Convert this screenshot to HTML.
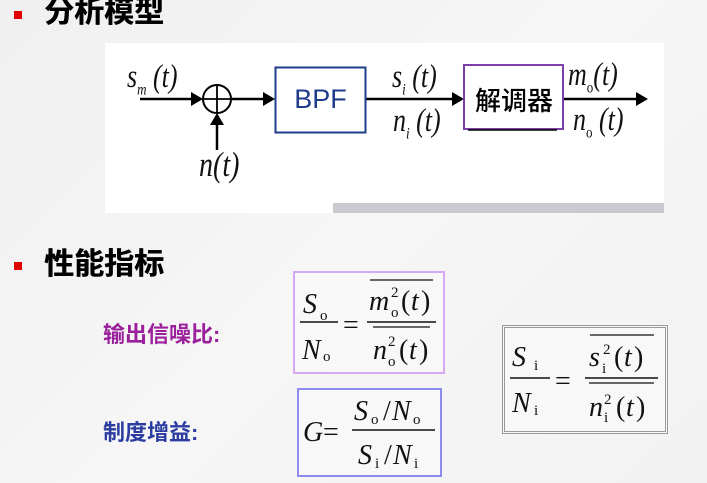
<!DOCTYPE html>
<html><head><meta charset="utf-8"><style>
body{margin:0;width:707px;height:483px;overflow:hidden;background:linear-gradient(135deg,#f0f0f0,#f7f6f6 50%,#f2f2f2);position:relative;font-family:"Liberation Sans","Noto Sans CJK SC",sans-serif}
.a{position:absolute}
.sq{width:8px;height:8px;background:#e00000}
.h{font-weight:bold;font-size:30px;color:#000;line-height:32px;text-shadow:0.5px 0 0 #000}
.m{font-family:"Liberation Serif",serif;font-style:italic;color:#111;white-space:nowrap;transform:scaleY(1.25);transform-origin:0 0}
.r{font-style:normal}
</style></head><body>
<div class="a sq" style="left:14px;top:11px"></div>
<div class="a h" style="left:44px;top:-3px">分析模型</div>
<div class="a" style="left:105px;top:43px;width:559px;height:170px;background:#fff"></div>
<div class="a" style="left:333px;top:203px;width:331px;height:10px;background:#c9c9cf"></div>
<svg class="a" style="left:0;top:0" width="707" height="483">
<g stroke="#000" stroke-width="2.5" fill="none">
<line x1="140" y1="99" x2="196" y2="99"/>
<line x1="232" y1="99" x2="266" y2="99"/>
<line x1="366" y1="99" x2="455" y2="99"/>
<line x1="564" y1="99" x2="636" y2="99"/>
<line x1="217" y1="150" x2="217" y2="124"/>
<circle cx="217" cy="99" r="14" stroke-width="2"/>
<line x1="203" y1="99" x2="231" y2="99" stroke-width="1.8"/>
<line x1="217" y1="85" x2="217" y2="113" stroke-width="1.8"/>
</g>
<g fill="#000">
<path d="M203 99 l-12 -7 v14z"/><path d="M275 99 l-12 -7 v14z"/><path d="M464 99 l-12 -7 v14z"/><path d="M648 99 l-12 -7 v14z"/><path d="M217 113 l-7 12 h14z"/>
</g>
<rect x="275.5" y="67.5" width="90" height="65" fill="#fff" stroke="#1f3c8a" stroke-width="2"/>
<rect x="464" y="65" width="99" height="64" fill="#fff" stroke="#7d3fa8" stroke-width="2"/>
<line x1="468" y1="130" x2="557" y2="130" stroke="#000" stroke-width="1.5"/>
</svg>
<div class="a" style="left:275px;top:84px;width:91px;text-align:center;font-size:27px;color:#1f3c8a">BPF</div>
<div class="a" style="left:464px;top:81px;width:100px;text-align:center;font-size:26px;color:#000;font-weight:500">解调器</div>
<div class="a m" style="left:127px;top:58px;font-size:26px">s<sub style="font-size:13px">m</sub> (t)</div>
<div class="a m" style="left:199px;top:146px;font-size:28px">n(t)</div>
<div class="a m" style="left:392px;top:58px;font-size:26px">s<sub style="font-size:13px">i</sub> (t)</div>
<div class="a m" style="left:393px;top:102px;font-size:26px">n<sub style="font-size:13px">i</sub> (t)</div>
<div class="a m" style="left:568px;top:56px;font-size:26px">m<sub style="font-size:13px" class="r">o</sub>(t)</div>
<div class="a m" style="left:573px;top:101px;font-size:26px">n<sub style="font-size:13px" class="r">o</sub> (t)</div>

<div class="a sq" style="left:14px;top:262px"></div>
<div class="a h" style="left:44px;top:249px">性能指标</div>
<div class="a" style="left:103px;top:317px;font-size:22px;font-weight:bold;color:#9a209c">输出信噪比:</div>
<div class="a" style="left:103px;top:415px;font-size:22px;font-weight:bold;color:#2b3da0">制度增益:</div>

<div class="a" style="left:293px;top:271px;width:148px;height:99px;border:2px solid #d6a8f2;background:#f8f8f8"></div>
<div class="a" style="left:297px;top:388px;width:141px;height:85px;border:2px solid #8c8cf0;background:#f8f8f8"></div>
<div class="a" style="left:502px;top:325px;width:160px;height:103px;border:3px double #999;background:#f8f8f8"></div>

<svg class="a" style="left:0;top:0" width="707" height="483" font-family="Liberation Serif,serif" font-style="italic" fill="#111">
<g font-size="28">
<text x="303" y="313">S</text><text x="320" y="320" font-size="15" font-style="normal">o</text>
<text x="302" y="359">N</text><text x="323" y="361" font-size="15" font-style="normal">o</text>
<line x1="300" y1="322" x2="338" y2="322" stroke="#111" stroke-width="1.5"/>
<text x="343" y="334" font-style="normal">=</text>
<line x1="370" y1="280" x2="433" y2="280" stroke="#111" stroke-width="1.3"/>
<text x="369" y="310">m</text><text x="391" y="297" font-size="15" font-style="normal">2</text><text x="391" y="317" font-size="15" font-style="normal">o</text><text x="401" y="310" font-style="normal">(</text><text x="411" y="310">t</text><text x="421" y="310" font-style="normal">)</text>
<line x1="367" y1="322" x2="436" y2="322" stroke="#111" stroke-width="1.5"/>
<line x1="373" y1="327" x2="430" y2="327" stroke="#111" stroke-width="1.3"/>
<text x="373" y="359">n</text><text x="388" y="346" font-size="15" font-style="normal">2</text><text x="388" y="366" font-size="15" font-style="normal">o</text><text x="399" y="359" font-style="normal">(</text><text x="409" y="359">t</text><text x="419" y="359" font-style="normal">)</text>

<text x="303" y="441">G</text><text x="323" y="441" font-style="normal">=</text>
<text x="354" y="420">S</text><text x="371" y="424" font-size="15" font-style="normal">o</text><text x="383" y="420" font-style="normal">/</text><text x="392" y="420">N</text><text x="413" y="424" font-size="15" font-style="normal">o</text>
<line x1="352" y1="430" x2="435" y2="430" stroke="#111" stroke-width="1.5"/>
<text x="358" y="464">S</text><text x="375" y="468" font-size="15" font-style="normal">i</text><text x="384" y="464" font-style="normal">/</text><text x="393" y="464">N</text><text x="414" y="468" font-size="15" font-style="normal">i</text>

<text x="512" y="366">S</text><text x="534" y="370" font-size="15" font-style="normal">i</text>
<text x="512" y="412">N</text><text x="534" y="415" font-size="15" font-style="normal">i</text>
<line x1="510" y1="378" x2="550" y2="378" stroke="#111" stroke-width="1.5"/>
<text x="555" y="390" font-style="normal">=</text>
<line x1="590" y1="335" x2="654" y2="335" stroke="#111" stroke-width="1.3"/>
<text x="589" y="366">s</text><text x="603" y="354" font-size="15" font-style="normal">2</text><text x="602" y="373" font-size="15" font-style="normal">i</text><text x="614" y="366" font-style="normal">(</text><text x="624" y="366">t</text><text x="634" y="366" font-style="normal">)</text>
<line x1="585" y1="378" x2="658" y2="378" stroke="#111" stroke-width="1.5"/>
<line x1="589" y1="383" x2="654" y2="383" stroke="#111" stroke-width="1.3"/>
<text x="589" y="416">n</text><text x="604" y="404" font-size="15" font-style="normal">2</text><text x="604" y="422" font-size="15" font-style="normal">i</text><text x="616" y="416" font-style="normal">(</text><text x="626" y="416">t</text><text x="636" y="416" font-style="normal">)</text>
</g>
</svg>
</body></html>
